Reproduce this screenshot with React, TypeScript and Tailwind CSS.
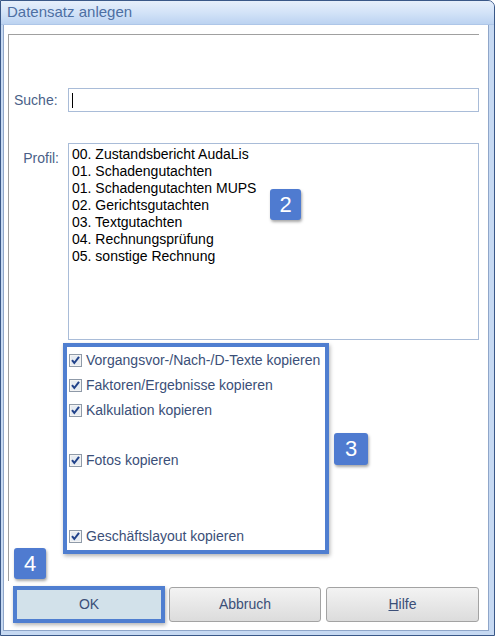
import React from 'react'

const profile = [
  '00. Zustandsbericht AudaLis',
  '01. Schadengutachten',
  '01. Schadengutachten MUPS',
  '02. Gerichtsgutachten',
  '03. Textgutachten',
  '04. Rechnungsprüfung',
  '05. sonstige Rechnung',
]

const Badge = ({ n, cls }: { n: string; cls: string }) => (
  <div className={"absolute flex items-center justify-center rounded-[3px] bg-[#4f7bd0] text-white text-[22px] leading-none shadow-[1px_2px_3px_rgba(0,0,0,0.35)] " + cls}>
    {n}
  </div>
)

const Check = ({ label, cls }: { label: string; cls?: string }) => (
  <div className={"flex items-center h-[25px] " + (cls || '')}>
    <svg width="13" height="13" viewBox="0 0 13 13" className="shrink-0">
      <rect x="0.5" y="0.5" width="12" height="12" fill="#f4f4f4" stroke="#8f9aa8" />
      <rect x="2" y="2" width="9" height="9" fill="#e6ebf1" />
      <path d="M3 6.2 L5.3 9 L10 2.8" fill="none" stroke="#21428a" strokeWidth="2" />
    </svg>
    <span className="ml-[4px] text-[14px] text-[#3b4f78]">{label}</span>
  </div>
)

const App = () => {
  return (
    <div className="w-[495px] h-[636px] bg-white" style={{ fontFamily: '"Liberation Sans", Arial, sans-serif' }}>
      <div className="w-full h-full flex flex-col border border-[#3a5888] rounded-tr-[7px] overflow-hidden bg-[#c6d9f2]">
        {/* title bar */}
        <div className="h-[24px] shrink-0 flex items-center pl-[6px] bg-gradient-to-b from-[#e6effb] via-[#d3e3f8] to-[#bcd3f1] border-b border-[#aec6e8]">
          <span className="text-[15px] text-[#4d6fa3]">Datensatz anlegen</span>
        </div>

        <div className="flex-1 flex pl-[2px] pr-[5px] pb-[4px]">
          <div className="flex-1 bg-white border-l border-r border-b border-[#8fa6c9] pl-[4px] pr-[9px] pt-[9px]">
            {/* panel */}
            <div className="relative border-t border-l border-[#a0a0a0] h-[547px] pl-[5px]">
              <div className="flex items-center mt-[53px] h-[24px]">
                <span className="w-[54px] text-[14px] text-[#4a5f88]">Suche:</span>
                <div className="flex-1 h-[24px] border border-[#a9bcd8] flex items-center pl-[3px]">
                  <div className="w-px h-[15px] bg-black" />
                </div>
              </div>

              <div className="flex mt-[31px]">
                <span className="w-[45px] text-right text-[14px] text-[#4a5f88] pt-[5px]">Profil:</span>
                <div className="ml-[9px] flex-1 h-[197px] border border-[#a9bcd8] pl-[3px] pt-[2px] text-[14px] leading-[17px] text-black">
                  {profile.map((p) => (
                    <div key={p}>{p}</div>
                  ))}
                </div>
              </div>

              <div className="ml-[49px] mt-[3px] w-[266px] h-[211px] border-[4px] border-[#4f7ed0] shadow-[1px_2px_4px_rgba(0,0,0,0.3)] pl-[2px] pt-[1px]">
                <Check label="Vorgangsvor-/Nach-/D-Texte kopieren" />
                <Check label="Faktoren/Ergebnisse kopieren" />
                <Check label="Kalkulation kopieren" />
                <Check label="Fotos kopieren" cls="mt-[25px]" />
                <Check label="Geschäftslayout kopieren" cls="mt-[51px]" />
              </div>

              <Badge n="2" cls="left-[261px] top-[154px] w-[31px] h-[31px]" />
              <Badge n="3" cls="left-[325px] top-[398px] w-[34px] h-[32px]" />
              <Badge n="4" cls="left-[5px] top-[513px] w-[32px] h-[31px]" />
            </div>

            {/* buttons */}
            <div className="flex gap-[4px] mt-[5px] pl-[5px]">
              <div className="w-[152px] h-[37px] border-[4px] border-[#4f7ed0] shadow-[1px_2px_4px_rgba(0,0,0,0.3)] bg-[#d2e1ea] flex items-center justify-center text-[14px] text-[#3b4f78]">
                OK
              </div>
              <div className="w-[152px] h-[35px] mt-[1px] rounded-[3px] border border-[#a3a3a3] bg-gradient-to-b from-[#f3f3f3] to-[#dcdcdc] flex items-center justify-center text-[14px] text-[#3b4f78]">
                Abbruch
              </div>
              <div className="w-[153px] h-[35px] mt-[1px] ml-[1px] rounded-[3px] border border-[#a3a3a3] bg-gradient-to-b from-[#f3f3f3] to-[#dcdcdc] flex items-center justify-center text-[14px] text-[#3b4f78]">
                <span><span className="underline">H</span>ilfe</span>
              </div>
            </div>
          </div>
        </div>
      </div>
    </div>
  )
}

export default App
